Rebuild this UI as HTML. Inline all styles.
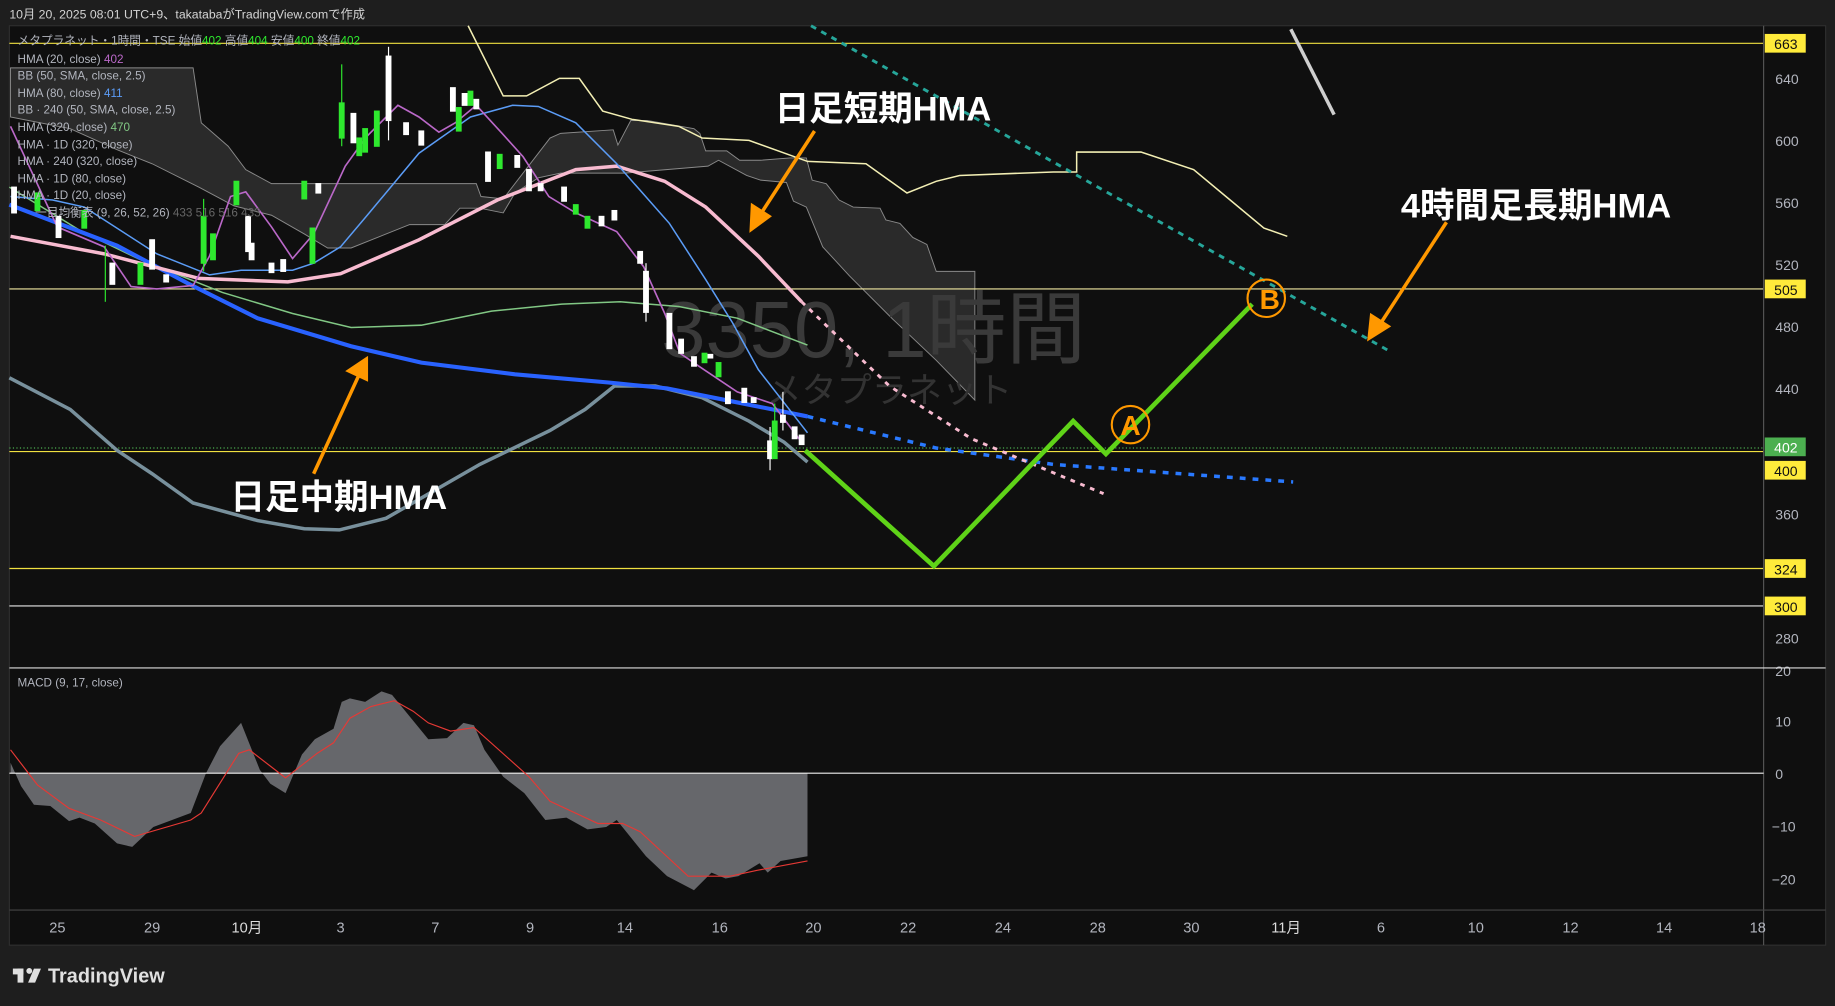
<!DOCTYPE html>
<html><head><meta charset="utf-8"><style>
html,body{margin:0;padding:0;background:#1e1e1e;width:1835px;height:1006px;overflow:hidden}
svg{display:block}
text{font-family:"Liberation Sans","Noto Sans CJK JP",sans-serif}
</style></head><body>
<svg width="1835" height="1006" viewBox="0 0 1568 860" preserveAspectRatio="none" xmlns="http://www.w3.org/2000/svg">
<rect x="0" y="0" width="1568" height="860" fill="#1e1e1e"/>
<text x="8" y="16" font-size="10.5" fill="#d4d4d4">10月 20, 2025 08:01 UTC+9、takatabaがTradingView.comで作成</text>
<rect x="8" y="22" width="1552" height="786" fill="#0f0f0f" stroke="#2e2e2e"/>
<path d="M9,58 165,58 172,105 195,125 210,145 232,157 407,157 411,168 430,170 470,118 479,114 524,111 528,124 539,103 553,103 593,110 598,114 603,129 621,129 632,137 650,137 675,135 689,135 694,154 706,157 717,171 729,177 752,178 757,188 769,191 780,203 792,209 800,232 833,232 L833,342 800,308 763,273 726,236 703,211 689,177 678,172 672,156 650,154 638,150 614,137 605,142 534,148 479,148 460,152 440,165 430,182 410,178 393,178 380,192 350,192 300,212 280,212 260,200 232,184 200,176 170,160 130,140 100,128 60,110 9,100Z" fill="#2a2a2a" stroke="#8a8a8a" stroke-width="0.8"/>
<line x1="8" y1="37" x2="1507" y2="37" stroke="#f0e040" stroke-width="1"/>
<line x1="8" y1="247" x2="1507" y2="247" stroke="#f0e8a0" stroke-width="1"/>
<line x1="8" y1="383" x2="1507" y2="383" stroke="#4caf50" stroke-width="1" stroke-dasharray="1,2"/>
<line x1="8" y1="386" x2="1507" y2="386" stroke="#f0e040" stroke-width="1"/>
<line x1="8" y1="486" x2="1507" y2="486" stroke="#f0e040" stroke-width="1"/>
<line x1="8" y1="518" x2="1507" y2="518" stroke="#e8e8e8" stroke-width="1"/>
<text x="565" y="305" font-size="68" fill="#3a3a3a">3350, 1時間</text>
<text x="655" y="344" font-size="30" fill="#333">メタプラネット</text>
<polyline fill="none" stroke="#f3efb4" stroke-width="1.3" points="400,22 430,82 450,82 478,67 495,67 515,95 540,102 580,108 600,118 640,120 690,138 740,140 775,165 800,155 820,150 900,147 920,147 920,130 975,130 1020,145 1050,170 1080,195 1100,202"/>
<line x1="693" y1="22" x2="1187" y2="300" stroke="#26a69a" stroke-width="2.5" stroke-dasharray="5,5"/>
<line x1="1103" y1="25" x2="1140" y2="98" stroke="#cfcfcf" stroke-width="3"/>
<polyline fill="none" stroke="#78909c" stroke-width="3" points="8,323 60,350 100,385 130,405 165,430 220,445 260,452 290,453 330,443 370,420 410,397 470,368 500,350 525,330 560,330 600,340 640,360 670,378 690,395"/>
<polyline fill="none" stroke="#81c784" stroke-width="1.3" points="8,160 70,198 120,222 190,250 250,268 300,280 360,278 420,266 480,260 530,258 580,262 630,272 690,295"/>
<polyline fill="none" stroke="#2962ff" stroke-width="3.5" points="8,175 100,210 160,242 220,272 300,296 360,310 440,320 520,327 570,332 620,342 660,350 690,356"/>
<polyline fill="none" stroke="#2979ff" stroke-width="3" stroke-dasharray="5,6" points="690,356 800,383 900,397 1105,412"/>
<polyline fill="none" stroke="#f8bbd0" stroke-width="3" points="9,202 89,217 170,238 246,241 291,234 358,205 425,171 492,145 527,142 568,155 603,177 648,219 685,258"/>
<polyline fill="none" stroke="#f8bbd0" stroke-width="2.5" stroke-dasharray="4,5" points="685,258 760,330 830,375 943,422"/>
<polyline fill="none" stroke="#5b9cf6" stroke-width="1.3" points="9,168 45,171 72,177 89,188 134,217 179,235 206,231 250,231 268,225 291,211 313,185 358,131 402,100 438,90 460,91 492,105 527,140 572,191 603,239 626,276 648,316 690,370"/>
<polyline fill="none" stroke="#ba68c8" stroke-width="1.4" points="9,108 49,194 89,211 112,245 134,247 165,244 179,219 197,168 210,164 232,194 250,221 268,200 295,142 313,117 340,90 358,100 375,113 389,105 407,90 429,114 447,134 469,168 492,182 527,198 550,228 568,268 581,302 600,315 630,335 660,345 685,378"/>
<g stroke-width="1">
<g fill="#fff" stroke="#fff">
<rect x="10" y="160" width="4" height="22"/><rect x="48" y="185" width="4" height="18"/><rect x="94" y="225" width="4" height="18"/><rect x="128" y="205" width="4" height="25"/><rect x="210" y="185" width="4" height="30"/><rect x="240" y="222" width="4" height="10"/><rect x="330" y="48" width="4" height="55"/><rect x="345" y="105" width="4" height="10"/><rect x="358" y="112" width="4" height="12"/><rect x="385" y="75" width="4" height="20"/><rect x="405" y="85" width="4" height="8"/><rect x="415" y="130" width="4" height="25"/><rect x="440" y="133" width="4" height="10"/><rect x="450" y="145" width="4" height="18"/><rect x="480" y="160" width="4" height="12"/><rect x="512" y="185" width="4" height="8"/><rect x="550" y="232" width="4" height="35"/><rect x="570" y="268" width="4" height="30"/><rect x="580" y="290" width="4" height="12"/><rect x="591" y="305" width="4" height="8"/><rect x="605" y="303" width="4" height="3"/><rect x="620" y="335" width="4" height="10"/><rect x="634" y="332" width="4" height="12"/><rect x="642" y="340" width="4" height="4"/><rect x="656" y="377" width="4" height="15"/><rect x="667" y="355" width="4" height="6"/><rect x="677" y="365" width="4" height="10"/><rect x="683" y="372" width="4" height="8"/>
<rect x="300" y="97" width="4" height="25"/><rect x="213" y="208" width="4" height="14"/><rect x="270" y="157" width="4" height="8"/><rect x="230" y="225" width="4" height="8"/><rect x="140" y="235" width="4" height="6"/><rect x="395" y="80" width="4" height="10"/><rect x="460" y="157" width="4" height="6"/><rect x="523" y="180" width="4" height="8"/><rect x="545" y="215" width="4" height="10"/>
<line x1="332" y1="40" x2="332" y2="120"/><line x1="552" y1="225" x2="552" y2="275"/><line x1="658" y1="365" x2="658" y2="402"/><line x1="669" y1="335" x2="669" y2="368"/>
</g>
<g fill="#2ee82e" stroke="#2ee82e">
<rect x="30" y="165" width="4" height="15"/><rect x="70" y="180" width="4" height="15"/><rect x="118" y="225" width="4" height="18"/><rect x="172" y="185" width="4" height="40"/><rect x="200" y="155" width="4" height="20"/><rect x="258" y="155" width="4" height="15"/><rect x="290" y="88" width="4" height="30"/><rect x="305" y="118" width="4" height="15"/><rect x="320" y="95" width="4" height="30"/><rect x="400" y="78" width="4" height="12"/><rect x="425" y="132" width="4" height="12"/><rect x="500" y="185" width="4" height="10"/><rect x="600" y="302" width="4" height="8"/><rect x="612" y="310" width="4" height="12"/><rect x="660" y="360" width="4" height="32"/>
<rect x="180" y="200" width="4" height="22"/><rect x="265" y="195" width="4" height="30"/><rect x="310" y="110" width="4" height="20"/><rect x="390" y="92" width="4" height="20"/><rect x="490" y="175" width="4" height="8"/>
<line x1="292" y1="55" x2="292" y2="125"/><line x1="662" y1="345" x2="662" y2="392"/><line x1="174" y1="170" x2="174" y2="232"/><line x1="90" y1="210" x2="90" y2="258"/>
</g></g>
<line x1="1507" y1="22" x2="1507" y2="808" stroke="#555"/>
<g font-size="12" fill="#b2b5be">
<text x="1517" y="72">640</text><text x="1517" y="125">600</text><text x="1517" y="178">560</text><text x="1517" y="231">520</text><text x="1517" y="284">480</text><text x="1517" y="337">440</text><text x="1517" y="444">360</text><text x="1517" y="550">280</text>
<text x="1517" y="578">20</text><text x="1517" y="621">10</text><text x="1517" y="666">0</text><text x="1514" y="711">−10</text><text x="1514" y="756">−20</text>
</g>
<g font-size="12">
<rect x="1508" y="29" width="35" height="16" fill="#ffeb3b"/><text x="1516" y="42" fill="#111">663</text>
<rect x="1508" y="239" width="35" height="16" fill="#ffeb3b"/><text x="1516" y="252" fill="#111">505</text>
<rect x="1508" y="374" width="35" height="16" fill="#4caf50"/><text x="1516" y="387" fill="#fff">402</text>
<rect x="1508" y="394" width="35" height="16" fill="#ffeb3b"/><text x="1516" y="407" fill="#111">400</text>
<rect x="1508" y="478" width="35" height="16" fill="#ffeb3b"/><text x="1516" y="491" fill="#111">324</text>
<rect x="1508" y="510" width="35" height="16" fill="#ffeb3b"/><text x="1516" y="523" fill="#111">300</text>
</g>
<line x1="8" y1="571" x2="1560" y2="571" stroke="#ddd"/>
<path d="M9,661 L9,652 18,672 29,688 43,689 59,702 68,699 81,704 100,721 113,724 131,707 163,695 176,661 188,638 206,618 222,658 231,670 244,678 258,645 269,632 285,623 292,600 299,597 312,600 326,591 335,594 366,632 382,631 396,618 405,620 414,641 430,664 448,678 466,701 484,699 502,709 518,707 527,701 552,732 570,749 593,761 608,746 620,751 631,749 649,738 656,746 667,736 690,732 690,661Z" fill="#66676b"/>
<line x1="8" y1="661" x2="1507" y2="661" stroke="#f0f0f0"/>
<polyline fill="none" stroke="#e53935" stroke-width="1" points="9,641 32,671 59,691 86,701 115,715 163,701 172,695 204,644 213,641 244,665 271,644 285,635 299,614 317,604 337,599 353,608 366,618 385,625 405,622 452,664 470,685 511,704 532,704 547,711 588,749 624,749 647,744 690,736"/>
<text x="15" y="587" font-size="10" fill="#b2b5be">MACD (9, 17, close)</text>
<line x1="8" y1="778" x2="1560" y2="778" stroke="#444"/>
<g font-size="12.5" fill="#b2b5be" text-anchor="middle">
<text x="49" y="797">25</text><text x="130" y="797">29</text><text x="211" y="797" fill="#ddd">10月</text><text x="291" y="797">3</text><text x="372" y="797">7</text><text x="453" y="797">9</text><text x="534" y="797">14</text><text x="615" y="797">16</text><text x="695" y="797">20</text><text x="776" y="797">22</text><text x="857" y="797">24</text><text x="938" y="797">28</text><text x="1018" y="797">30</text><text x="1099" y="797" fill="#ddd">11月</text><text x="1180" y="797">6</text><text x="1261" y="797">10</text><text x="1342" y="797">12</text><text x="1422" y="797">14</text><text x="1502" y="797">18</text>
</g>
<g font-size="10" fill="#b2b5be">
<text x="15" y="38">メタプラネット・1時間・TSE 始値<tspan fill="#2ee82e">402</tspan> 高値<tspan fill="#2ee82e">404</tspan> 安値<tspan fill="#2ee82e">400</tspan> 終値<tspan fill="#2ee82e">402</tspan></text>
<text x="15" y="54">HMA (20, close) <tspan fill="#ba68c8">402</tspan></text>
<text x="15" y="68">BB (50, SMA, close, 2.5)</text>
<text x="15" y="83">HMA (80, close) <tspan fill="#5b9cf6">411</tspan></text>
<text x="15" y="97">BB · 240 (50, SMA, close, 2.5)</text>
<text x="15" y="112">HMA (320, close) <tspan fill="#81c784">470</tspan></text>
<text x="15" y="127">HMA · 1D (320, close)</text>
<text x="15" y="141">HMA · 240 (320, close)</text>
<text x="15" y="156">HMA · 1D (80, close)</text>
<text x="15" y="170">HMA · 1D (20, close)</text>
<text x="30" y="185">一目均衡表 (9, 26, 52, 26) <tspan fill="#666">433 516 516 433</tspan></text>
</g>
<polyline fill="none" stroke="#5fd318" stroke-width="4" stroke-linejoin="miter" points="688,385 798,484 917,360 945,388 1070,260"/>
<g fill="none" stroke="#ff9800" stroke-width="1.8">
<circle cx="966" cy="363" r="16"/><circle cx="1082" cy="255" r="16"/></g>
<g font-size="24" font-weight="bold" fill="#ff9800" text-anchor="middle">
<text x="966" y="372">A</text><text x="1085" y="264">B</text></g>
<g font-size="29.5" font-weight="bold" fill="#fff">
<text x="662" y="103">日足短期HMA</text>
<text x="1197" y="186">4時間足長期HMA</text>
<text x="197" y="435">日足中期HMA</text>
</g>
<g stroke="#ff9800" stroke-width="3" fill="#ff9800">
<line x1="696" y1="112" x2="650" y2="183"/><path d="M642,196 L643,176 657,185Z"/>
<line x1="1236" y1="190" x2="1180" y2="276"/><path d="M1170,289 L1172,270 1186,279Z"/>
<line x1="268" y1="405" x2="307" y2="320"/><path d="M313,307 L298,317 313,324Z"/>
</g>
<g fill="#e0e0e0"><rect x="11" y="828" width="9" height="5"/><rect x="15" y="828" width="5" height="12"/><circle cx="25" cy="830" r="2.5"/><path d="M29,828 L35,828 30,840 24,840Z"/></g>
<text x="41" y="840" font-size="17" font-weight="bold" fill="#e0e0e0">TradingView</text>
</svg>
</body></html>
